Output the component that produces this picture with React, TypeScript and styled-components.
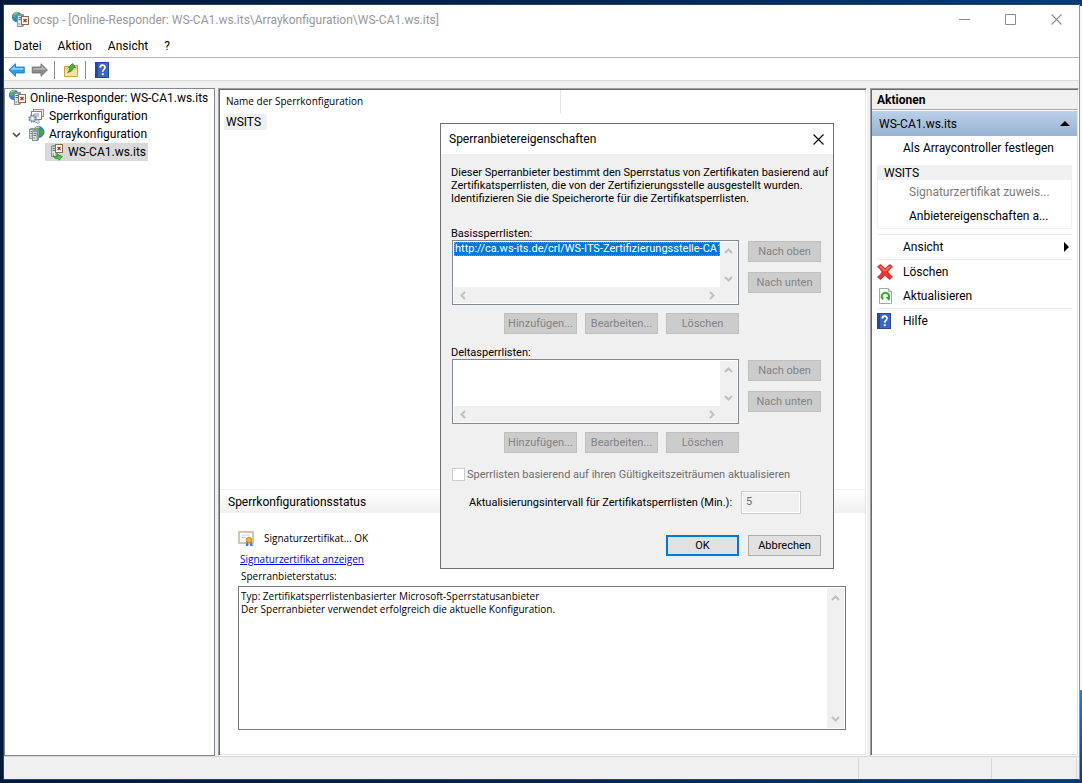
import React from "react";
import styled, { createGlobalStyle, css } from "styled-components";

const shellFont = `Roboto, "Open Sans", sans-serif`;
const gridFont = `"Open Sans", "Noto Sans", sans-serif`;

const GlobalStyle = createGlobalStyle`
  * { box-sizing: border-box; }
  body {
    margin: 0;
    color: #000;
    font: 12px/18px ${shellFont};
  }
  button, input, textarea { font: inherit; color: inherit; margin: 0; padding: 0; }
  ul { list-style: none; margin: 0; padding: 0; }
  h1, h2, h3, p { margin: 0; font: inherit; }
  svg { display: block; flex: none; }
`;

/* ---------- desktop and window frame ---------- */

const Desktop = styled.div`
  display: grid;
  grid-template-columns: minmax(0, 1fr) 2px;
  min-height: 100vh;
  padding: 4px 0 3px 3px;
  background: linear-gradient(90deg, #001a3c, #00244c 50%, #003c7c);
`;

const Backdrop = styled.div`
  display: flex;
  flex-direction: column;
`;

const BackWindow = styled.div`
  flex: 1;
  margin-top: 2px;
  background: #f7f7f7;
  border-bottom: 1px solid #777;
`;

const BackGlow = styled.div`
  height: 89px;
  background: linear-gradient(#0a84f0, #0a6ccc 30%, #00408a);
`;

const Window = styled.div`
  position: relative;
  display: flex;
  flex-direction: column;
  min-width: 0;
  border: 1px solid #2c4560;
  border-right-color: #8f979e;
  background: #f0f0f0;
`;

const TitleBar = styled.header`
  display: flex;
  align-items: center;
  height: 30px;
  padding-left: 8px;
  background: #fff;
  color: #999;
`;

const WindowTitle = styled.h1`
  flex: 1;
  padding-left: 3px;
  white-space: nowrap;
`;

const CaptionButton = styled.button`
  display: grid;
  place-items: center;
  align-self: flex-start;
  width: 46px;
  height: 28px;
  border: 0;
  background: none;
  color: #8a8a8a;
`;

const MenuBar = styled.nav`
  display: flex;
  height: 23px;
  padding-left: 2px;
  background: #fff;
  border-bottom: 1px solid #b4b4b4;
`;

const MenuItem = styled.button`
  padding: 0 8px;
  border: 0;
  background: none;
`;

const Toolbar = styled.div`
  display: flex;
  align-items: center;
  height: 23px;
  padding: 1px 0 0 4px;
  gap: 5px;
  background: #fff;
  border-bottom: 1px solid #d9d9d9;
`;

const ToolButton = styled.button`
  display: grid;
  place-items: center;
  width: 18px;
  height: 20px;
  border: 0;
  background: none;
`;

const ToolDivider = styled.span`
  width: 1px;
  height: 18px;
  margin-right: 2px;
  background: #8c8c8c;
`;

const Body = styled.div`
  flex: 1;
  display: grid;
  grid-template-columns: 211px minmax(0, 1fr) 209px;
  gap: 3px;
  padding-top: 7px;
`;

const StatusBar = styled.footer`
  display: grid;
  grid-template-columns: minmax(0, 1fr) 133px 85px 2px;
  height: 23px;
  padding-top: 1px;
  border-top: 1px solid #d7d7d7;
`;

const StatusCell = styled.span`
  border-right: 1px solid #d7d7d7;
`;

/* ---------- console tree ---------- */

const TreePane = styled.section`
  background: #fff;
  border: 1px solid #828790;
`;

const TreeNode = styled.li<{ $level: number }>`
  display: flex;
  align-items: center;
  height: 18px;
  padding-left: ${(p) => [4, 23, 5, 45][p.$level]}px;
  white-space: nowrap;
`;

const Twisty = styled.span`
  width: 18px;
  padding-left: 2px;
`;

const NodeLabel = styled.span<{ $selected?: boolean }>`
  display: flex;
  align-items: center;
  gap: 3px;
  ${(p) =>
    p.$selected &&
    css`
      margin-left: -5px;
      padding: 0 2px 0 5px;
      background: #d9d9d9;
    `}
`;

/* ---------- sunken panes ---------- */

const Sunken = styled.section`
  display: flex;
  flex-direction: column;
  min-width: 0;
  background: #fff;
  border: 1px solid;
  border-color: #a0a0a0 #fff #fff #a0a0a0;
  box-shadow: inset 1px 1px #696969, inset -1px -1px #e3e3e3;
  padding: 1px;
`;

const ListArea = styled.div`
  flex: 1;
`;

const ListTable = styled.table`
  border-collapse: collapse;
  width: 100%;
  table-layout: fixed;
  font: 10px/16px ${gridFont};
`;

const HeadCell = styled.th<{ $first?: boolean }>`
  width: ${(p) => (p.$first ? "340px" : "auto")};
  height: 24px;
  padding: 0 6px 2px;
  text-align: left;
  font-weight: 400;
  border-right: ${(p) => (p.$first ? "1px solid #e5e5e5" : "0")};
`;

const BodyCell = styled.td`
  padding: 0 4px;
  height: 16px;
`;

const RowName = styled.span`
  display: inline-block;
  padding: 0 6px 0 2px;
  background: #f0f0f0;
  font: 12px/16px ${shellFont};
`;

const StatusArea = styled.div`
  display: flex;
  flex-direction: column;
  height: 265px;
  font: 10px/16px ${gridFont};
`;

const StatusHeading = styled.h2`
  height: 24px;
  padding-left: 8px;
  font: 12px/24px ${shellFont};
  background: linear-gradient(#fff, #f0f0f0);
  border-top: 1px solid #efefef;
`;

const StatusBody = styled.div`
  display: flex;
  flex-direction: column;
  align-items: flex-start;
  flex: 1;
  padding: 16px 19px 24px 18px;
`;

const CertLine = styled.p`
  display: flex;
  align-items: center;
  gap: 10px;
  height: 18px;
`;

const CertLink = styled.a`
  margin: 4px 0 0 2px;
  color: #0000ee;
`;

const OutputLabel = styled.label`
  margin: 1px 0 2px 3px;
`;

const OutputBox = styled.div`
  display: flex;
  align-self: stretch;
  flex: 1;
  padding: 1px;
  border: 1px solid #7a7a7a;
`;

const Output = styled.textarea`
  flex: 1;
  min-width: 0;
  padding: 2px 1px;
  border: 0;
  outline: 0;
  resize: none;
  overflow: hidden;
  line-height: 13px;
`;

const VScroll = styled.div<{ $short?: boolean }>`
  display: flex;
  flex-direction: column;
  justify-content: space-between;
  align-items: center;
  width: 17px;
  padding: ${(p) => (p.$short ? "4px" : "5px")} 0;
  background: #f0f0f0;
`;

const HScroll = styled.div`
  display: flex;
  justify-content: space-between;
  align-items: center;
  grid-column: 1 / -1;
  padding: 0 21px 0 4px;
  background: #f0f0f0;
`;

/* ---------- actions pane ---------- */

const ActionsHeading = styled.h2`
  height: 20px;
  padding-left: 5px;
  font-weight: 700;
  line-height: 20px;
  background: #f0f0f0;
  border-bottom: 1px solid #a8a8a8;
`;

const GroupHeading = styled.button`
  display: flex;
  align-items: center;
  justify-content: space-between;
  height: 25px;
  margin-top: 1px;
  padding: 0 7px;
  border: 0;
  background: linear-gradient(#bad0e9, #99b3d2);
`;

const ActionRow = styled.button<{ $indent?: boolean }>`
  display: flex;
  align-items: center;
  width: 100%;
  height: 24px;
  padding: 0 ${(p) => (p.$indent ? 0 : 3)}px 0 ${(p) => (p.$indent ? 31 : 0)}px;
  border: 0;
  background: none;
  text-align: left;
  white-space: nowrap;
  &:disabled { color: #7b7b7b; }
`;

const ActionIcon = styled.span`
  display: flex;
  width: 26px;
`;

const ActionText = styled.span`
  flex: 1;
`;

const ActionList = styled.div`
  padding: 0 5px;
`;

const SubGroup = styled.section`
  height: 64px;
  margin: 5px 0;
  border: 1px solid #f0f0f0;
`;

const SubGroupHeading = styled.h3`
  height: 14px;
  padding-left: 6px;
  line-height: 14px;
  background: #f0f0f0;
`;

const Rule = styled.hr`
  height: 1px;
  margin: 0;
  border: 0;
  background: #ececec;
`;

/* ---------- properties dialog ---------- */

const Dialog = styled.div`
  position: absolute;
  top: 118px;
  left: 436px;
  width: 394px;
  border: 1px solid #6e6e6e;
  background: #f0f0f0;
  font: 11px/13px ${shellFont};
`;

const DialogTitle = styled.header`
  display: flex;
  align-items: center;
  justify-content: space-between;
  height: 30px;
  padding: 0 9px 0 8px;
  background: #fff;
  font-size: 12px;
`;

const CloseButton = styled.button`
  border: 0;
  background: none;
`;

const DialogBody = styled.div`
  padding: 12px 12px 12px 10px;
`;

const Intro = styled.p`
  margin-bottom: 22px;
  white-space: nowrap;
`;

const ListBlock = styled.section`
  display: grid;
  grid-template-columns: 288px 73px;
  column-gap: 9px;
  margin-bottom: 12px;
`;

const ListLabel = styled.label`
  grid-column: 1 / -1;
`;

const ListBox = styled.div`
  display: grid;
  grid-template-columns: minmax(0, 1fr) 17px;
  grid-template-rows: 45px 16px;
  margin-left: 1px;
  padding: 1px;
  border: 1px solid #828790;
  background: #fff;
`;

const Options = styled.ul`
  overflow: hidden;
`;

const Option = styled.li`
  height: 14px;
  padding-left: 1px;
  line-height: 14px;
  white-space: nowrap;
  background: #0078d7;
  color: #fff;
  outline: 1px dotted #6f9fc8;
  outline-offset: -1px;
`;

const OrderButtons = styled.div`
  display: flex;
  flex-direction: column;
  gap: 10px;
  padding-top: 1px;
`;

const EditButtons = styled.div`
  display: flex;
  justify-content: flex-end;
  gap: 8px;
  padding-top: 8px;
`;

const PushButton = styled.button<{ $default?: boolean }>`
  width: 73px;
  height: 21px;
  background: #e1e1e1;
  border: ${(p) => (p.$default ? "2px solid #0078d7" : "1px solid #adadad")};
  white-space: nowrap;
  &:disabled {
    background: #cccccc;
    border-color: #bfbfbf;
    color: #838383;
  }
`;

const CheckRow = styled.label`
  display: flex;
  align-items: center;
  gap: 2px;
  height: 13px;
  margin: 15px 0 0 1px;
  color: #6d6d6d;
`;

const CheckBox = styled.input`
  appearance: none;
  width: 13px;
  height: 13px;
  border: 1px solid #cccccc;
  background: #fff;
`;

const IntervalRow = styled.div`
  display: flex;
  align-items: center;
  justify-content: space-between;
  margin: 10px 20px 0 18px;
`;

const IntervalInput = styled.input`
  width: 60px;
  height: 23px;
  padding: 0 4px 3px;
  border: 1px solid #cccccc;
  box-shadow: inset 0 0 0 1px #fff;
  background: #f0f0f0;
  color: #6d6d6d;
`;

const DialogButtons = styled.footer`
  display: flex;
  justify-content: flex-end;
  gap: 9px;
  margin-top: 21px;
`;

/* ---------- drawings ---------- */

const Chevron = ({ d, c = "#bfbfbf", w = 2 }: { d: "up" | "down" | "left" | "right"; c?: string; w?: number }) => {
  const paths = {
    up: "M1 7 4.500 3.500 8 7",
    down: "M1 3 4.500 6.500 8 3",
    left: "M7 1 3.500 4.500 7 8",
    right: "M3 1 6.500 4.500 3 8",
  };
  return (
    <svg width="9" height="9" viewBox="0 0 9 9" fill="none" stroke={c} strokeWidth={w}>
      <path d={paths[d]} />
    </svg>
  );
};

const Globe = ({ x, y, r }: { x: number; y: number; r: number }) => (
  <g transform={`translate(${x} ${y}) scale(${r / 5})`}>
    <circle r="5" fill="#2f86d6" stroke="#2a5f9e" strokeWidth=".6" />
    <path d="M-4-2C-3-4.500 0-5 1-4.300L0-2.500-1.500-1-2 1-4 0Z" fill="#5dbb3a" />
    <path d="M1.500-1.500 4-2.500 4.700 0 3.500 3 1.500 3.500 2 1 .8 0Z" fill="#4ca82e" />
    <path d="M-3.500-3Q-1.500-4.800 1-4.300" stroke="#bfe3ff" fill="none" strokeWidth=".8" />
  </g>
);

const Tower = ({ x, y, h = 11 }: { x: number; y: number; h?: number }) => (
  <g transform={`translate(${x} ${y})`}>
    <path d={`M0 1 2 0H7V${h}L5.500 ${h + 1}H0Z`} fill="#8d979c" />
    <path d={`M.5 1.500H5V${h + 0.5}H.5Z`} fill="#dfe6e6" stroke="#77848a" strokeWidth=".7" />
    <path d="M1.500 3.500H4.200M1.500 5.500H4.200" stroke="#5b6b70" />
    <path d={`M1.500 ${h - 2}H3`} stroke="#3fae3f" strokeWidth="1.200" />
  </g>
);

const RedCert = ({ x, y }: { x: number; y: number }) => (
  <g transform={`translate(${x} ${y})`}>
    <rect x=".5" y=".5" width="7" height="8" fill="#fffaf2" stroke="#8a6d4c" />
    <path d="M2.500 3 5.500 6M5.500 3 2.500 6" stroke="#b02a22" strokeWidth="1.200" />
  </g>
);

const ResponderIcon = () => (
  <svg width="18" height="18" viewBox="0 0 18 18">
    <Globe x={5} y={6} r={4.8} />
    <Tower x={5} y={3} h={12} />
    <RedCert x={9} y={5} />
  </svg>
);

const RevocationIcon = () => (
  <svg width="18" height="18" viewBox="1 0 18 18">
    <rect x="6.500" y="2.500" width="10" height="7" fill="#f6efd8" stroke="#a98f58" />
    <rect x="4.500" y="4.500" width="10" height="8" fill="#fff" stroke="#8f8060" />
    <path d="M7 7H12M8 9H12" stroke="#6f8fd0" />
    <circle cx="5.500" cy="11.500" r="3.300" fill="#c9d6e2" stroke="#6f86a0" strokeWidth="2" strokeDasharray="1.500 1.100" />
    <circle cx="5.500" cy="11.500" r="2.600" fill="#cfdbe6" stroke="#7f93aa" strokeWidth=".8" />
    <circle cx="5.500" cy="11.500" r="1" fill="#fff" />
    <circle cx="10.500" cy="14.500" r="1.800" fill="#dbe5ee" stroke="#7f93aa" strokeWidth="1.200" strokeDasharray="1 .7" />
  </svg>
);

const ArrayIcon = () => (
  <svg width="18" height="18" viewBox="1 0 18 18">
    <Globe x={11.5} y={7} r={5.6} />
    <Tower x={2} y={3} h={10} />
    <Tower x={5} y={5} h={10} />
  </svg>
);

const MemberIcon = () => (
  <svg width="15" height="18" viewBox="3 0 15 18">
    <Tower x={4} y={2} h={11} />
    <RedCert x={8} y={1} />
    <path d="M6 12.500Q8 14.500 11 13.300L10.500 11.300 15.500 13.500 12 17.300 11.500 15.500Q7.500 16.500 6 12.500Z" fill="#4cc23a" stroke="#1e8a1e" strokeWidth=".7" />
  </svg>
);

const ArrowIcon = ({ dir }: { dir: "back" | "forward" }) => {
  const back = dir === "back";
  return (
    <svg width="18" height="16" viewBox="0 0 18 16">
      <path
        d="M1 8 7.500 1.700V5H16.300V11H7.500V14.300Z"
        transform={back ? undefined : "matrix(-1 0 0 1 17.500 0)"}
        fill={back ? "#2f9fe6" : "#8b8b8b"}
        stroke={back ? "#1f6fb5" : "#6a6a6a"}
        strokeWidth=".8"
      />
      <path
        d="M2.500 7.700 6.800 3.700V6H15.300V7.700Z"
        transform={back ? undefined : "matrix(-1 0 0 1 17.500 0)"}
        fill={back ? "#8fd4f8" : "#b5b5b5"}
      />
    </svg>
  );
};

const FolderIcon = () => (
  <svg width="16" height="16" viewBox="0 0 16 16">
    <path d="M1.500 4.500H7L8 3.500H14.500V14.500H1.500Z" fill="#efcf78" stroke="#c9a24c" />
    <path d="M2 8H14V14H2Z" fill="#f9e3a0" />
    <path d="M4.500 10.500Q6.500 9 7 5.500L5.500 5.500 9.500 1.500 12.500 5.500 10.500 5.500Q9.500 10 4.500 10.500Z" fill="#46b83a" stroke="#23801f" strokeWidth=".7" />
  </svg>
);

const HelpIcon = () => (
  <svg width="14" height="16" viewBox="0 0 14 16">
    <rect x=".5" y=".5" width="13" height="15" fill="#3c66c4" stroke="#24479a" />
    <path d="M.5 .5H3V15.500H.5Z" fill="#27479b" />
    <path d="M5.200 5.600Q5.300 3.200 7.700 3.200T10 5.500Q10 6.700 8.700 7.600 7.700 8.300 7.700 9.800" fill="none" stroke="#fff" strokeWidth="1.700" />
    <rect x="6.800" y="11.200" width="1.900" height="1.900" fill="#fff" />
  </svg>
);

const DeleteIcon = () => (
  <svg width="16" height="16" viewBox="0 0 16 16">
    <path
      d="M.5 2.800 3.300 .5Q6 2 8 4.800 10.500 2 13 .5L15.500 2.800Q12.500 5 10.800 8 13 10.800 15.500 12.800L12.800 15.500Q10 13.500 8 11.300 6 13.800 3.300 15.500L.5 13Q3.500 11 5.200 8 3.500 5 .5 2.800Z"
      fill="#ea352f"
      stroke="#b5282a"
      strokeWidth=".8"
    />
    <path d="M2.500 2.600 3.500 1.700Q6.300 3.800 8 6.300 10.300 3.300 13 1.800L14 2.700Q11 4.500 9.300 7.300H6.500Q4.800 4.300 2.500 2.600Z" fill="#f8766b" />
  </svg>
);

const RefreshIcon = () => (
  <svg width="16" height="16" viewBox="0 0 16 16">
    <path d="M2.500 .5H11.500L14.500 3.500V15.500H2.500Z" fill="#fdfdfd" stroke="#a3a9ad" />
    <path d="M11.500 .5V3.500H14.500" fill="#dfe4e8" stroke="#a3a9ad" />
    <path d="M6.200 11.300A3.600 3.600 0 1 1 11.500 10.300" fill="none" stroke="#35b02d" strokeWidth="2" />
    <path d="M8.700 9 13 8.700 12.300 13Z" fill="#2a9a24" />
  </svg>
);

const CertificateIcon = () => (
  <svg width="16" height="16" viewBox="0 0 16 16">
    <rect x="1" y="2" width="14" height="11" fill="#fff" stroke="#c2b6a0" strokeWidth="1.600" />
    <path d="M3.500 5H12M3.500 7.500H8" stroke="#c9cfe6" />
    <path d="M9.500 11.500 8.500 15.500 10.500 14.500M12.500 11.500 14 15.500 12 14.500" stroke="#3d6fd0" strokeWidth="1.500" fill="none" />
    <circle cx="11" cy="10" r="2.800" fill="#efb42a" stroke="#b57d10" strokeWidth=".8" />
  </svg>
);

const Cross = ({ c }: { c: string }) => (
  <svg width="11" height="11" viewBox="0 0 11 11" stroke={c} strokeWidth="1.100">
    <path d="M.5 .5 10.500 10.500M10.500 .5 .5 10.500" />
  </svg>
);

/* ---------- composed parts ---------- */

function CrlList({ id, label, items }: { id: string; label: string; items: string[] }) {
  return (
    <ListBlock>
      <ListLabel id={id}>{label}</ListLabel>
      <ListBox>
        <Options role="listbox" aria-labelledby={id}>
          {items.map((item) => (
            <Option key={item} role="option" aria-selected>
              {item}
            </Option>
          ))}
        </Options>
        <VScroll $short>
          <Chevron d="up" />
          <Chevron d="down" />
        </VScroll>
        <HScroll>
          <Chevron d="left" />
          <Chevron d="right" />
        </HScroll>
      </ListBox>
      <OrderButtons>
        <PushButton disabled>Nach oben</PushButton>
        <PushButton disabled>Nach unten</PushButton>
      </OrderButtons>
      <EditButtons>
        <PushButton disabled>Hinzufügen...</PushButton>
        <PushButton disabled>Bearbeiten...</PushButton>
        <PushButton disabled>Löschen</PushButton>
      </EditButtons>
    </ListBlock>
  );
}

export default function App() {
  return (
    <Desktop>
      <GlobalStyle />
      <Window>
        <TitleBar>
          <ResponderIcon />
          <WindowTitle>ocsp - [Online-Responder: WS-CA1.ws.its\Arraykonfiguration\WS-CA1.ws.its]</WindowTitle>
          <CaptionButton aria-label="Minimieren">
            <svg width="11" height="11" stroke="currentColor"><path d="M0 5.500H11" /></svg>
          </CaptionButton>
          <CaptionButton aria-label="Maximieren">
            <svg width="11" height="11" fill="none" stroke="currentColor"><path d="M.5 .5H10.500V10.500H.5Z" /></svg>
          </CaptionButton>
          <CaptionButton aria-label="Schließen">
            <Cross c="#8a8a8a" />
          </CaptionButton>
        </TitleBar>
        <MenuBar>
          {["Datei", "Aktion", "Ansicht", "?"].map((name) => (
            <MenuItem key={name}>{name}</MenuItem>
          ))}
        </MenuBar>
        <Toolbar>
          <ToolButton aria-label="Zurück"><ArrowIcon dir="back" /></ToolButton>
          <ToolButton aria-label="Vorwärts"><ArrowIcon dir="forward" /></ToolButton>
          <ToolDivider />
          <ToolButton aria-label="Eine Ebene nach oben"><FolderIcon /></ToolButton>
          <ToolDivider />
          <ToolButton aria-label="Hilfe"><HelpIcon /></ToolButton>
        </Toolbar>

        <Body>
          <TreePane>
            <ul role="tree">
              <TreeNode $level={0} role="treeitem">
                <NodeLabel><ResponderIcon />Online-Responder: WS-CA1.ws.its</NodeLabel>
              </TreeNode>
              <TreeNode $level={1} role="treeitem">
                <NodeLabel><RevocationIcon />Sperrkonfiguration</NodeLabel>
              </TreeNode>
              <TreeNode $level={2} role="treeitem" aria-expanded>
                <Twisty><Chevron d="down" c="#404040" w={1.5} /></Twisty>
                <NodeLabel><ArrayIcon />Arraykonfiguration</NodeLabel>
              </TreeNode>
              <TreeNode $level={3} role="treeitem" aria-selected>
                <NodeLabel $selected><MemberIcon />WS-CA1.ws.its</NodeLabel>
              </TreeNode>
            </ul>
          </TreePane>

          <Sunken>
            <ListArea>
              <ListTable>
                <thead>
                  <tr>
                    <HeadCell $first>Name der Sperrkonfiguration</HeadCell>
                    <HeadCell />
                  </tr>
                </thead>
                <tbody>
                  <tr>
                    <BodyCell><RowName>WSITS</RowName></BodyCell>
                    <BodyCell />
                  </tr>
                </tbody>
              </ListTable>
            </ListArea>
            <StatusArea>
              <StatusHeading>Sperrkonfigurationsstatus</StatusHeading>
              <StatusBody>
                <CertLine><CertificateIcon />Signaturzertifikat... OK</CertLine>
                <CertLink href="#zertifikat">Signaturzertifikat anzeigen</CertLink>
                <OutputLabel htmlFor="anbieterstatus">Sperranbieterstatus:</OutputLabel>
                <OutputBox>
                  <Output
                    id="anbieterstatus"
                    readOnly
                    value={
                      "Typ: Zertifikatsperrlistenbasierter Microsoft-Sperrstatusanbieter\nDer Sperranbieter verwendet erfolgreich die aktuelle Konfiguration."
                    }
                  />
                  <VScroll>
                    <Chevron d="up" />
                    <Chevron d="down" />
                  </VScroll>
                </OutputBox>
              </StatusBody>
            </StatusArea>
          </Sunken>

          <Sunken>
            <ActionsHeading>Aktionen</ActionsHeading>
            <GroupHeading>
              WS-CA1.ws.its
              <svg width="10" height="5"><path d="M0 5 5 0 10 5Z" /></svg>
            </GroupHeading>
            <ActionList>
              <ActionRow><ActionIcon /><ActionText>Als Arraycontroller festlegen</ActionText></ActionRow>
              <SubGroup>
                <SubGroupHeading>WSITS</SubGroupHeading>
                <ActionRow $indent disabled>Signaturzertifikat zuweis...</ActionRow>
                <ActionRow $indent>Anbietereigenschaften a...</ActionRow>
              </SubGroup>
              <Rule />
              <ActionRow>
                <ActionIcon />
                <ActionText>Ansicht</ActionText>
                <svg width="5" height="10"><path d="M0 0 5 5 0 10Z" /></svg>
              </ActionRow>
              <Rule />
              <ActionRow><ActionIcon><DeleteIcon /></ActionIcon><ActionText>Löschen</ActionText></ActionRow>
              <ActionRow><ActionIcon><RefreshIcon /></ActionIcon><ActionText>Aktualisieren</ActionText></ActionRow>
              <Rule />
              <ActionRow><ActionIcon><HelpIcon /></ActionIcon><ActionText>Hilfe</ActionText></ActionRow>
            </ActionList>
          </Sunken>
        </Body>

        <StatusBar>
          <StatusCell />
          <StatusCell />
          <StatusCell />
        </StatusBar>

        <Dialog role="dialog" aria-labelledby="dialogtitel">
          <DialogTitle>
            <span id="dialogtitel">Sperranbietereigenschaften</span>
            <CloseButton aria-label="Schließen"><Cross c="#000" /></CloseButton>
          </DialogTitle>
          <DialogBody>
            <Intro>
              Dieser Sperranbieter bestimmt den Sperrstatus von Zertifikaten basierend auf
              <br />
              Zertifikatsperrlisten, die von der Zertifizierungsstelle ausgestellt wurden.
              <br />
              Identifizieren Sie die Speicherorte für die Zertifikatsperrlisten.
            </Intro>
            <CrlList id="basis" label="Basissperrlisten:" items={["http://ca.ws-its.de/crl/WS-ITS-Zertifizierungsstelle-CA1"]} />
            <CrlList id="delta" label="Deltasperrlisten:" items={[]} />
            <CheckRow>
              <CheckBox type="checkbox" disabled />
              Sperrlisten basierend auf ihren Gültigkeitszeiträumen aktualisieren
            </CheckRow>
            <IntervalRow>
              <label htmlFor="intervall">Aktualisierungsintervall für Zertifikatsperrlisten (Min.):</label>
              <IntervalInput id="intervall" disabled defaultValue="5" />
            </IntervalRow>
            <DialogButtons>
              <PushButton $default>OK</PushButton>
              <PushButton>Abbrechen</PushButton>
            </DialogButtons>
          </DialogBody>
        </Dialog>
      </Window>
      <Backdrop>
        <BackWindow />
        <BackGlow />
      </Backdrop>
    </Desktop>
  );
}
